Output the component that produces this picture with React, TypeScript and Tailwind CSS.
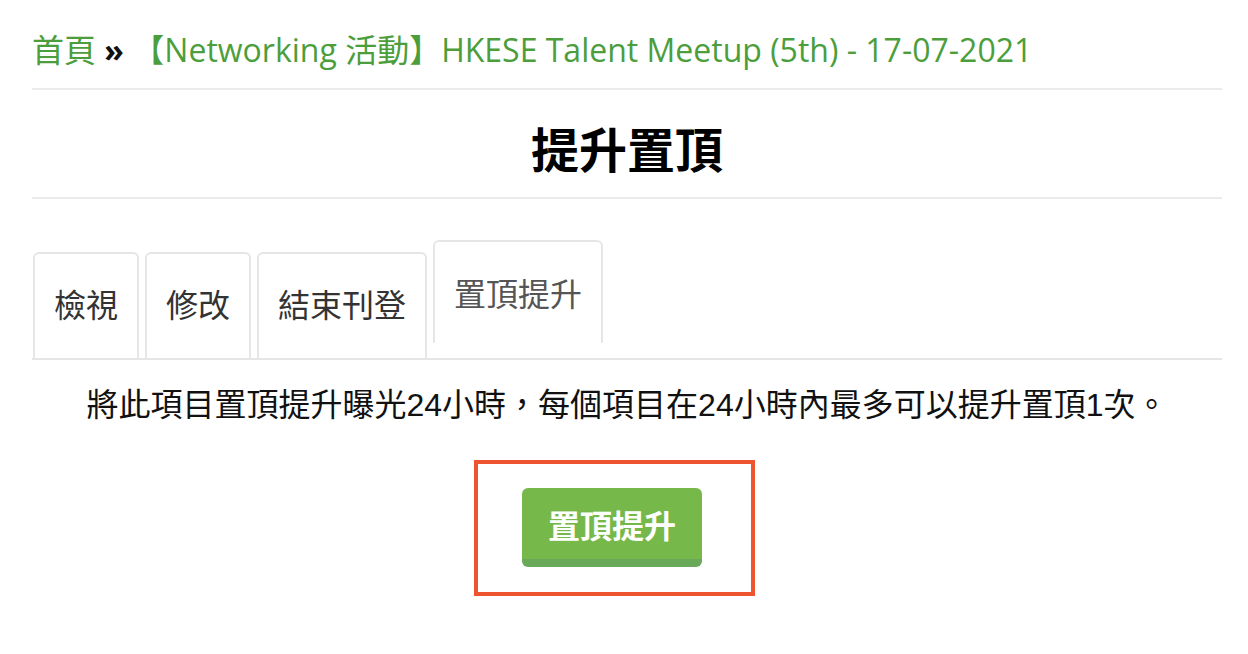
import React from "react";

const cjk = { fontFamily: '"Liberation Sans", "Noto Sans CJK TC", sans-serif' };
const crumbFont = { fontFamily: '"Open Sans", "Noto Sans CJK TC", sans-serif' };

function Tab({ label, active = false }: { label: string; active?: boolean }) {
  if (active) {
    return (
      <div className="mb-[15px] flex h-[103px] items-center rounded-t-[6px] border-2 border-b-0 border-[#e6e6e6] bg-white px-[19px] pt-[4px] text-[32px] leading-[40px] text-[#555]">
        {label}
      </div>
    );
  }
  return (
    <div className="flex h-[106px] items-center rounded-t-[6px] border-2 border-b-0 border-[#e6e6e6] bg-white px-[19px] text-[32px] leading-[40px] text-[#333]">
      {label}
    </div>
  );
}

export default function App() {
  return (
    <div className="min-h-[654px] w-[1248px] bg-white pl-[32px] pr-[26px]" style={cjk}>
      <div className="mb-[16px] pt-[28px] text-[32px] leading-[44px] whitespace-nowrap" style={crumbFont}>
        <span className="text-[#4b9e3b]">首頁</span>
        <span className="font-bold text-[#111]"> » </span>
        <span className="text-[#4b9e3b]">【Networking 活動】HKESE Talent Meetup (5th) - 17-07-2021</span>
      </div>
      <div className="h-[2px] bg-[#ebebeb]" />
      <div className="flex h-[107px] items-center justify-center pt-[16px] text-[48px] font-bold leading-[56px] text-black">
        提升置頂
      </div>
      <div className="h-[2px] bg-[#ebebeb]" />
      <div className="mt-[41px] ml-[1px] flex items-end gap-[6px]">
        <Tab label="檢視" />
        <Tab label="修改" />
        <Tab label="結束刊登" />
        <Tab label="置頂提升" active />
      </div>
      <div className="h-[2px] bg-[#e6e6e6]" />
      <div className="mt-[21px] text-center text-[32px] leading-[48px] text-[#111] whitespace-nowrap">
        將此項目置頂提升曝光24小時，每個項目在24小時內最多可以提升置頂1次。
      </div>
      <div className="mt-[31px] ml-[442px] h-[136px] w-[281px] border-4 border-[#ee5430] pl-[44px] pt-[24px]">
        <button className="flex h-[79px] w-[180px] items-center justify-center rounded-[6px] border-b-[8px] border-[#68a95a] bg-[#76b84a] pt-[6px] text-[32px] font-bold leading-[40px] text-white">
          置頂提升
        </button>
      </div>
    </div>
  );
}
